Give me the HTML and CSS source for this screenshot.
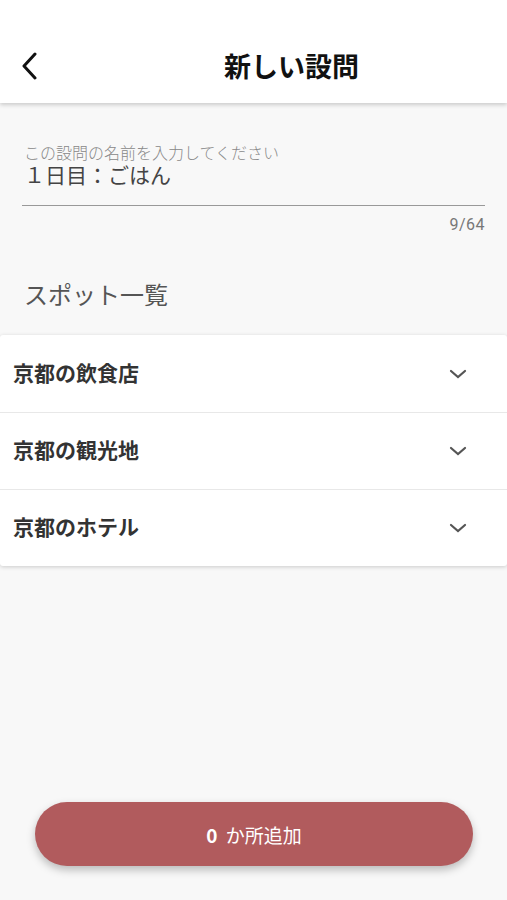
FILE: index.html
```html
<!DOCTYPE html>
<html lang="ja">
<head>
    <meta charset="UTF-8">
    <meta name="viewport" content="width=device-width, initial-scale=1.0">
    <title>新しい設問</title>
    <link rel="stylesheet" href="styles.css">
</head>
<body>
    <header class="topbar">
        <button class="back" type="button" aria-label="戻る">
            <svg width="20" height="28" viewBox="0 0 20 28"><path d="M15 2 L4 14 L15 26" fill="none" stroke="#111" stroke-width="3" stroke-linecap="round" stroke-linejoin="round"/></svg>
        </button>
        <h1 class="title">新しい設問</h1>
    </header>

    <!-- Question name input -->
    <section class="field">
        <label class="field-label" for="qname">この設問の名前を入力してください</label>
        <input class="field-input" id="qname" type="text" value="１日目：ごはん">
        <div class="counter">9/64</div>
    </section>

    <h2 class="section-title">スポット一覧</h2>

    <!-- Spot categories -->
    <div class="spot-list">
        <div class="spot-row">
            <span>京都の飲食店</span>
            <svg class="chev" width="18" height="12" viewBox="0 0 18 12"><path d="M2 3 L9 9 L16 3" fill="none" stroke="#555" stroke-width="2.2" stroke-linecap="round"/></svg>
        </div>
        <div class="spot-row">
            <span>京都の観光地</span>
            <svg class="chev" width="18" height="12" viewBox="0 0 18 12"><path d="M2 3 L9 9 L16 3" fill="none" stroke="#555" stroke-width="2.2" stroke-linecap="round"/></svg>
        </div>
        <div class="spot-row">
            <span>京都のホテル</span>
            <svg class="chev" width="18" height="12" viewBox="0 0 18 12"><path d="M2 3 L9 9 L16 3" fill="none" stroke="#555" stroke-width="2.2" stroke-linecap="round"/></svg>
        </div>
    </div>

    <div class="footer">
        <button class="add-btn" type="button"><b>0</b> か所追加</button>
    </div>
</body>
</html>
```

FILE: styles.css
```css
html, body {
    height: 100%;
}
body {
    margin: 0;
    background: #f8f8f8;
    font-family: "Noto Sans CJK JP", "Noto Sans", sans-serif;
    color: #333;
    display: flex;
    flex-direction: column;
}
.topbar {
    height: 103px;
    background: #fff;
    box-shadow: 0 2px 4px rgba(0, 0, 0, 0.18);
    display: flex;
    align-items: flex-end;
    padding: 0 0 19px 20px;
    box-sizing: border-box;
}
.back {
    background: none;
    border: none;
    padding: 0;
    width: 24px;
    height: 36px;
    display: flex;
    align-items: center;
}
.title {
    margin: 0 0 0 180px;
    font-size: 27px;
    font-weight: 700;
    color: #111;
    line-height: 36px;
}
.field {
    padding: 40px 22px 0 22px;
}
.field-label {
    display: block;
    font-size: 16px;
    font-weight: 300;
    color: #888;
    line-height: 18px;
    padding-left: 2px;
}
.field-input {
    display: block;
    width: 100%;
    box-sizing: border-box;
    border: none;
    border-bottom: 1px solid #999;
    background: transparent;
    font-family: inherit;
    font-size: 21px;
    color: #444;
    padding: 0 0 18px 2px;
    line-height: 26px;
    outline: none;
}
.counter {
    text-align: right;
    font-family: Roboto, sans-serif;
    font-size: 16px;
    letter-spacing: 0.5px;
    color: #777;
    margin-top: 9px;
}
.section-title {
    margin: 42px 0 24px 24px;
    font-size: 24px;
    font-weight: 400;
    color: #555;
}
.spot-list {
    background: #fff;
    box-shadow: 0 1px 4px rgba(0, 0, 0, 0.18);
    border-radius: 3px;
}
.spot-row {
    height: 77px;
    display: flex;
    align-items: center;
    justify-content: space-between;
    padding: 0 40px 4px 13px;
    box-sizing: border-box;
    font-size: 21px;
    font-weight: 700;
    color: #333;
    border-top: 1px solid #e8e8e8;
}
.spot-row:first-child {
    border-top: none;
}
.chev {
    margin-top: 4px;
}
.footer {
    margin-top: auto;
    padding: 0 34px 34px 35px;
}
.add-btn {
    width: 100%;
    height: 64px;
    border: none;
    border-radius: 32px;
    background: #b15b5d;
    color: #fff;
    font-family: inherit;
    font-size: 19px;
    box-shadow: 0 4px 8px rgba(0, 0, 0, 0.25);
}
.add-btn b {
    margin-right: 4px;
}
```
